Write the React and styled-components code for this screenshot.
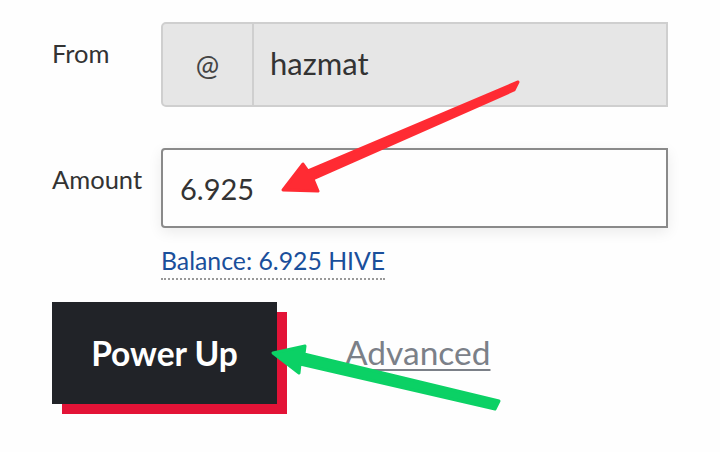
import React from "react";
import styled, { createGlobalStyle } from "styled-components";

const GlobalStyle = createGlobalStyle`
	html, body {
		margin: 0;
		padding: 0;
		background: #fefefe;
		font-family: Lato, "Liberation Sans", sans-serif;
		color: #333;
	}
`;

const Page = styled.div`
	position: relative;
	width: 720px;
	height: 452px;
	overflow: hidden;
	padding: 22px 52px 0 52px;
	box-sizing: border-box;
`;

const Row = styled.div`
	display: grid;
	grid-template-columns: 109px 507px;
	align-items: start;
	margin-bottom: ${(props) => props.gap || 0}px;
`;

const Label = styled.label`
	font-size: 25.5px;
	padding-top: ${(props) => props.offset || 0}px;
	color: #333;
`;

const InputGroup = styled.div`
	display: flex;
	height: 85px;
	border: 2px solid #cfcfcf;
	border-radius: 5px 0 0 5px;
	background: #e6e6e6;
	box-sizing: border-box;
`;

const Addon = styled.span`
	width: 89px;
	display: flex;
	align-items: center;
	justify-content: center;
	font-size: 28px;
	color: #444;
	border-right: 2px solid #cfcfcf;
`;

const ReadOnly = styled.span`
	display: flex;
	align-items: center;
	padding-left: 16px;
	font-size: 31px;
	color: #333;
	padding-bottom: 4px;
`;

const AmountInput = styled.div`
	height: 80px;
	border: 2px solid #8a8a8a;
	border-radius: 4px 0 0 4px;
	background: #fefefe;
	box-sizing: border-box;
	display: flex;
	align-items: center;
	padding-left: 17px;
	font-size: 29px;
	color: #333;
	box-shadow: 0 4px 14px rgba(0, 0, 0, 0.08);
`;

const Balance = styled.span`
	grid-column: 2;
	justify-self: start;
	margin-top: 18px;
	font-size: 24.8px;
	color: #1a4f9b;
	border-bottom: 2px dotted #999;
	padding-bottom: 2px;
	line-height: 1.2;
`;

const Actions = styled.div`
	display: flex;
	align-items: center;
	margin-top: 22px;
	gap: 68px;
`;

const PowerButton = styled.button`
	width: 225px;
	height: 102px;
	background: #212328;
	color: #fff;
	border: none;
	font-family: inherit;
	font-weight: 700;
	font-size: 33.5px;
	box-shadow: 10px 10px 0 #e31337;
	cursor: pointer;
	padding: 0;
`;

const AdvancedLink = styled.a`
	font-size: 33.5px;
	color: #7b8088;
	text-decoration: underline;
	text-underline-offset: 4px;
	text-decoration-thickness: 2px;
	margin-bottom: 2px;
`;

const Overlay = styled.svg`
	position: absolute;
	left: 0;
	top: 0;
	pointer-events: none;
`;

export default function App() {
	return (
		<>
			<GlobalStyle />
			<Page>
				<Row gap={41}>
					<Label offset={16}>From</Label>
					<InputGroup>
						<Addon>@</Addon>
						<ReadOnly>hazmat</ReadOnly>
					</InputGroup>
				</Row>
				<Row>
					<Label offset={16}>Amount</Label>
					<AmountInput>6.925</AmountInput>
					<Balance>Balance: 6.925 HIVE</Balance>
				</Row>
				<Actions>
					<PowerButton>Power Up</PowerButton>
					<AdvancedLink>Advanced</AdvancedLink>
				</Actions>
				<Overlay width="720" height="452" viewBox="0 0 720 452">
					<path
						d="M518 82 L514 90 L313 179 L318 191 L283 190 L303 164 L308 171 Z"
						fill="#ff2b33"
						stroke="#ff2b33"
						strokeWidth="3"
						strokeLinejoin="round"
					/>
					<path
						d="M499 401 L495 409 L300 364 L299 373 L273 353 L305 346 L304 354 Z"
						fill="#0bd165"
						stroke="#0bd165"
						strokeWidth="3"
						strokeLinejoin="round"
					/>
				</Overlay>
			</Page>
		</>
	);
}
